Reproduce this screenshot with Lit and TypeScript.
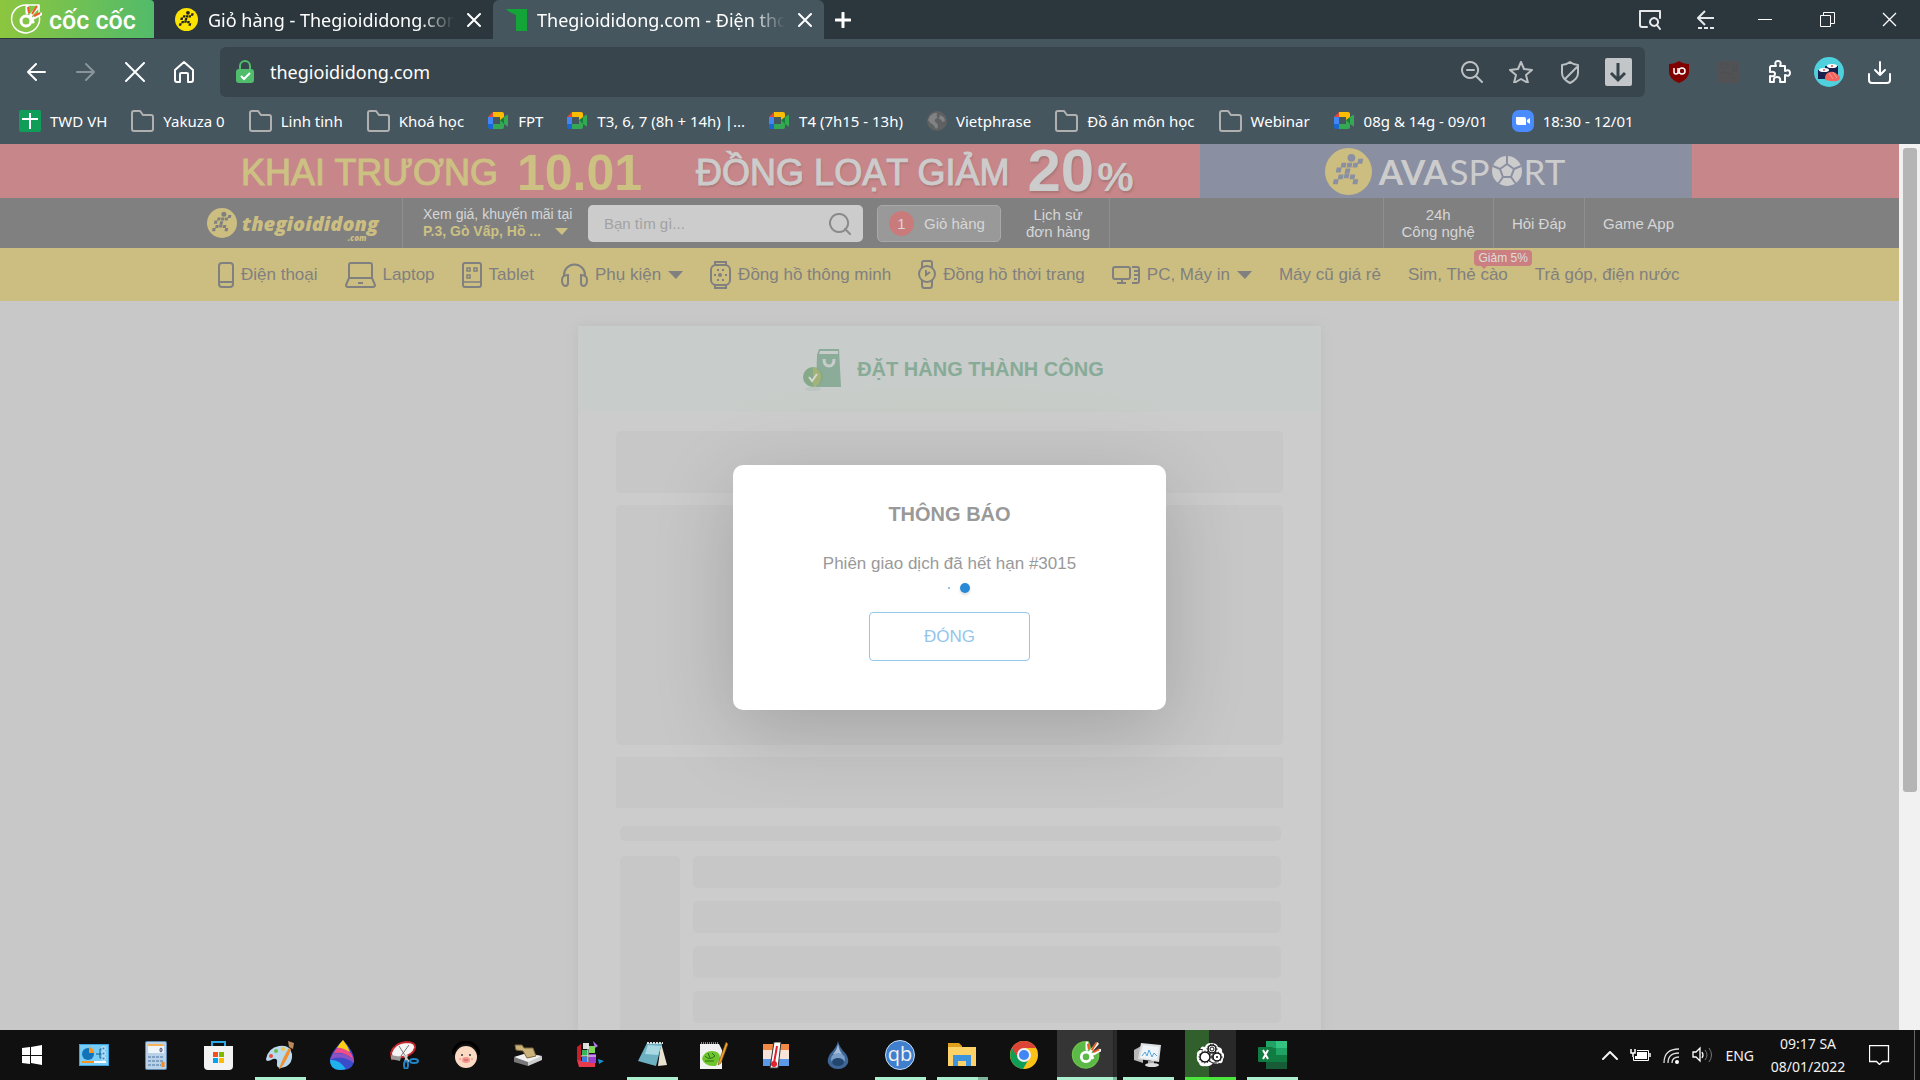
import { LitElement, html, svg, css, TemplateResult } from "lit";
import { customElement } from "lit/decorators.js";

type Art = TemplateResult;

const draw = (w: number, h: number, body: Art, view = `0 0 ${w} ${h}`) =>
  html`<svg width=${w} height=${h} viewBox=${view} fill="none" aria-hidden="true">${body}</svg>`;

/* ---------- shared marks ---------- */

const runnerBlocks: [number, number][] = [
  [36, 13], [31, 17], [25, 17], [19, 17], [14, 22], [23, 23], [22, 28], [28, 29],
  [16, 29], [31, 34], [11, 34],
];
const runner = (size: number, disc: string, ink: string) =>
  draw(size, size, svg`
    <circle cx="24" cy="24" r="24" fill=${disc} />
    <circle cx="27" cy="10" r="4" fill=${ink} />
    ${runnerBlocks.map(([x, y]) => svg`<path d="M${x - 2} ${y - 2}h5l-1 5h-5z" fill=${ink} />`)}
  `, "0 0 48 48");

const cocHand = (size: number, ring: string, fill: string, ground: string) =>
  draw(size, size, svg`
    <path d="M17 2A14 14 0 1 0 29 12L29 2Z" fill=${fill} stroke=${ring} stroke-width="1.5" stroke-linejoin="round" />
    <path d="M19 1h12v12l-7 2z" fill=${ground} />
    <circle cx="16" cy="18" r="5" stroke="#fff" stroke-width="3" />
    <path d="M20 13l3 6M17 3v7M28 4l-7 8M31 11l-7 4" stroke="#fff" stroke-width="3" stroke-linecap="round" />
    <path d="M18 4l1 6M27 3l-5 8M30 10l-6 3" stroke="#f15a24" stroke-width="2" />
  `, "0 0 32 32");

const caret = draw(15, 8, svg`<path d="M0 0h15L8 8z" fill="currentColor" />`);

/* ---------- browser chrome ---------- */

const line = (w: number, h: number, d: string, width = 2) =>
  draw(w, h, svg`<path d=${d} stroke="currentColor" stroke-width=${width} stroke-linecap="round" stroke-linejoin="round" />`);

const ui = {
  close: line(14, 14, "M1 1l12 12M13 1L1 13"),
  plus: line(16, 16, "M8 1v14M1 8h14", 3),
  back: line(20, 20, "M18 10H1M9 2l-8 8 8 8"),
  forward: line(20, 20, "M1 10h17M10 2l8 8-8 8"),
  stop: line(20, 20, "M1 1l18 18M19 1L1 19"),
  home: line(22, 24, "M2 10l9-8 9 8v10q0 2-2 2h-3v-8q0-1-1-1H8q-1 0-1 1v8H4q-2 0-2-2z"),
  lock: draw(18, 24, svg`
    <path d="M4 10V6a5 5 0 0 1 10 0v4" stroke="#4fbd6c" stroke-width="2" />
    <rect y="9" width="18" height="14" rx="3" fill="#4fbd6c" />
    <path d="M5 16l3 3 6-6" stroke="#fff" stroke-width="2" />`),
  zoomOut: line(22, 22, "M9 1a8 8 0 1 0 .1 0M15 15l6 6M6 9h7"),
  star: line(24, 22, "M12 1l3 7 8 1-6 5 2 8-7-4-7 4 2-8-6-5 8-1z"),
  shield: line(20, 23, "M10 1q4 3 8 3v8q0 6-8 10q-8-4-8-10V4q4 0 8-3zM17 6L5 18"),
  save: draw(27, 28, svg`
    <rect width="27" height="28" rx="2" fill="#c3c6c8" />
    <path d="M13 5v17M6 15l7 7 7-7" stroke="#37434b" stroke-width="3" />`),
  ublock: draw(20, 22, svg`
    <path d="M10 0q4 3 10 3v8q0 7-10 11Q0 18 0 11V3q6 0 10-3z" fill="#800000" />
    <path d="M5 7v4q0 2 2 2t2-2V7v6" stroke="#fff" stroke-width="1.5" />
    <circle cx="13" cy="10" r="3" stroke="#fff" stroke-width="1.5" />`),
  dim: draw(22, 22, svg`
    <rect width="22" height="22" rx="2" fill="#525254" />
    <path d="M3 3h7v4H3zM15 3h4v4h-4zM3 12q3-3 5 0t6-1 5 1M4 17h3m4 0h1m3 0h3" stroke="#484f54" stroke-width="1" />`),
  puzzle: line(25, 24, "M4 6h5q-2-5 2-5t2 5h5v5q5-2 5 2t-5 2v7h-5q1-5-3-5t-3 5H3v-6q5 1 5-2t-5-2V7z"),
  sushi: draw(31, 31, svg`
    <circle cx="15" cy="15" r="15" fill="#4fd0dd" />
    <path d="M11 9v9h13V9z" fill="#18224c" /><ellipse cx="18" cy="9" rx="5" ry="2" fill="#fff" />
    <circle cx="18" cy="9" r="1" fill="#e5484d" />
    <path d="M4 13v9h12v-9z" fill="#18224c" /><ellipse cx="10" cy="13" rx="5" ry="2" fill="#fff" />
    <circle cx="10" cy="13" r="1" fill="#e5484d" />
    <path d="M11 21q0-5 5-6t10 5q0 3-3 4t-12-1z" fill="#f4645f" />
    <path d="M15 16l4 6M19 15l4 6" stroke="#ff9d96" />`),
  download: line(23, 23, "M12 1v13M7 9l5 5 5-5M1 13v6q0 3 3 3h15q3 0 3-3v-6"),
  capture: line(22, 20, "M8 17H3q-2 0-2-2V1h20v7M15 8a4 4 0 1 0 .1 0M18 15l3 4"),
  shelf: draw(19, 19, svg`<path d="M17 8H1M8 1L1 8l7 7" stroke="currentColor" stroke-width="2" /><path d="M1 18h18" stroke="currentColor" stroke-width="2" stroke-dasharray="4 2" />`),
  minimise: draw(14, 2, svg`<path d="M0 0h14v1H0z" fill="#fff" />`),
  restore: draw(15, 15, svg`<path d="M.5 3.5h10v11H.5zM3.5 3V.5h11v11H11" stroke="#fff" />`),
  quit: draw(15, 15, svg`<path d="M1 1l13 13M14 1L1 14" stroke="#fff" stroke-width="1.3" />`),
};

const mark: Record<string, Art> = {
  sheet: draw(22, 22, svg`<rect width="22" height="22" rx="2" fill="#0f9d58" /><path d="M11 3v16M3 9h16" stroke="#fff" stroke-width="2" />`),
  folder: draw(23, 22, svg`<path d="M1 18V3q0-2 2-2h6l3 4h8q2 0 2 2v12q0 2-2 2H3q-2 0-2-2z" stroke="#b0b0b0" stroke-width="2" />`),
  meet: draw(21, 17, svg`
    <path d="M0 5h5v7H0z" fill="#4285f4" /><path d="M0 5l5-5v5z" fill="#ea4335" />
    <path d="M5 0h9q2 0 2 2v5l-4 2V5H5z" fill="#fbbc04" />
    <path d="M5 12h7V8l4 2v5q0 2-2 2H5z" fill="#34a853" /><path d="M0 12h5v5H2q-2 0-2-2z" fill="#1967d2" />
    <path d="M12 8l4-3v7z" fill="#15803a" /><path d="M16 5l3-2q1-1 1 1v10q0 1-1 0l-3-2z" fill="#34a853" />`),
  globe: draw(20, 20, svg`<circle cx="10" cy="10" r="10" fill="#5f6062" /><path d="M3 5q5-4 7-3-1 4 1 5-4 0-3 4 3 1 3 5l-2 2q-2-4-4-5t-4-4zM13 4q5 2 5 6l-3 1q0-3-3-3z" fill="#808284" />`),
  zoom: draw(22, 22, svg`<rect width="22" height="22" rx="7" fill="#4a8cff" /><path d="M4 7h8q2 0 2 2v6H6q-2 0-2-2zM15 10l3-2v6l-3-2z" fill="#fff" />`),
};

const bookmarks: [string, string][] = [
  ["sheet", "TWD VH"], ["folder", "Yakuza 0"], ["folder", "Linh tinh"], ["folder", "Khoá học"],
  ["meet", "FPT"], ["meet", "T3, 6, 7 (8h + 14h) |..."], ["meet", "T4 (7h15 - 13h)"],
  ["globe", "Vietphrase"], ["folder", "Đồ án môn học"], ["folder", "Webinar"],
  ["meet", "08g & 14g - 09/01"], ["zoom", "18:30 - 12/01"],
];

/* ---------- shop navigation ---------- */

const nav = {
  phone: draw(16, 26, svg`<rect x="1" y="1" width="14" height="24" rx="3" stroke="currentColor" stroke-width="2" /><path d="M1 20h14" stroke="currentColor" stroke-width="2" />`),
  laptop: draw(31, 26, svg`<path d="M4 16V3q0-2 2-2h19q2 0 2 2v13zM4 16l-3 7q0 2 2 2h25q2 0 2-2l-3-7M13 21h5" stroke="currentColor" stroke-width="2" />`),
  tablet: draw(20, 26, svg`<rect x="1" y="1" width="18" height="24" rx="2" stroke="currentColor" stroke-width="2" /><path d="M1 20h18M5 6h3v3H5zM12 6h3v3h-3zM5 13h3v3H5z" stroke="currentColor" stroke-width="1.5" />`),
  headphones: draw(27, 24, svg`<path d="M3 14v-2a10 10 0 0 1 21 0v2M7 12q-6 0-6 5t3 6q3 0 3-3zM20 12q6 0 6 5t-3 6q-3 0-3-3z" stroke="currentColor" stroke-width="2" />`),
  smartwatch: draw(21, 28, svg`<rect x="1" y="4" width="19" height="20" rx="5" stroke="currentColor" stroke-width="2" /><path d="M5 4V1h11v3M5 24v3h11v-3" stroke="currentColor" stroke-width="2" />
    <path d="M7 9h2M12 9h2M4 14h2M15 14h2M7 19h2M12 19h2" stroke="currentColor" stroke-width="2" /><circle cx="10" cy="14" r="2" fill="currentColor" />`),
  watch: draw(18, 29, svg`<circle cx="9" cy="14" r="8" stroke="currentColor" stroke-width="2" /><path d="M4 8V3q0-2 2-2h6q2 0 2 2v5M4 20v5q0 3 2 3h6q2 0 2-3v-5M8 10v5l4-3" stroke="currentColor" stroke-width="2" />`),
  pc: draw(28, 20, svg`<rect x="1" y="2" width="17" height="12" rx="2" stroke="currentColor" stroke-width="2" /><path d="M10 14v4M5 18h9M20 2h5q2 0 2 2v12q0 2-2 2h-5M22 6h4M22 10h4M22 14h3" stroke="currentColor" stroke-width="2" />`),
};

type NavItem = { text: string; icon?: Art; more?: boolean; badge?: string };
const navItems: NavItem[] = [
  { text: "Điện thoại", icon: nav.phone },
  { text: "Laptop", icon: nav.laptop },
  { text: "Tablet", icon: nav.tablet },
  { text: "Phụ kiện", icon: nav.headphones, more: true },
  { text: "Đồng hồ thông minh", icon: nav.smartwatch },
  { text: "Đồng hồ thời trang", icon: nav.watch },
  { text: "PC, Máy in", icon: nav.pc, more: true },
  { text: "Máy cũ giá rẻ" },
  { text: "Sim, Thẻ cào", badge: "Giảm 5%" },
  { text: "Trả góp, điện nước" },
];

const magnifier = line(22, 22, "M10 1a9 9 0 1 0 .1 0M16 16l5 5");
const football = draw(30, 30, svg`
  <circle cx="15" cy="15" r="15" fill="#ccc" />
  <path d="M15 8l7 5-3 8h-8l-3-8z" stroke="#8a8fa1" stroke-width="2" />
  <path d="M15 0v8M22 13l7-3M19 21l5 7M11 21l-5 7M8 13l-7-3" stroke="#8a8fa1" stroke-width="2" />`);
const bag = draw(48, 46, svg`
  <path d="M24 3h20l2 38H21l1-32z" fill="#8aac98" />
  <path d="M25 5h18v3H24z" fill="#c8cccb" />
  <path d="M29 13q0 7 5 7t5-7" stroke="#c8cccb" stroke-width="3" />
  <ellipse cx="18" cy="43" rx="8" ry="2" fill="#bcc5c0" />
  <circle cx="18" cy="31" r="10" fill="#86a98a" />
  <path d="M18 21a10 10 0 0 1 8 10 10 10 0 0 1-8 10z" fill="#a3b378" />
  <path d="M14 31l3 4 5-7" stroke="#d5d8d0" stroke-width="2" />`);

/* ---------- taskbar ---------- */

const cogs: [number, number, number][] = [[9, 14, 5], [16, 6, 4], [21, 14, 4]];

const app: Record<string, Art> = {
  start: draw(20, 20, svg`<path d="M0 3l8-1v8H0zM9 2l11-2v10H9zM0 11h8v8l-8-1zM9 11h11v9L9 18z" fill="#fff" />`),
  slides: draw(30, 22, svg`<rect width="30" height="22" fill="#3ba3e0" /><rect x="1" y="1" width="28" height="20" fill="#79cdf5" />
    <circle cx="9" cy="10" r="6" fill="#1273b8" /><path d="M10 9V3a6 6 0 0 1 5 6z" fill="#f7941d" />
    <path d="M17 10h4M21 5v9M21 5h3M21 10h3M21 14h3" stroke="#0e5a94" stroke-width="1" /><path d="M23 3h3v3h-3zM23 8h3v3h-3zM23 13h3v3h-3z" stroke="#fff" fill="#2f8fd0" stroke-width=".7" />
    <path d="M3 18h12" stroke="#f7941d" stroke-width="2" /><path d="M15 18h12" stroke="#fff" stroke-width="2" />`),
  calc: draw(22, 29, svg`<rect width="22" height="29" rx="2" fill="#5f87ab" /><rect x="1" y="1" width="20" height="27" rx="1" fill="#b9d2e8" />
    <rect x="3" y="4" width="16" height="8" fill="#eef5fb" /><path d="M3 4h16" stroke="#f7b35c" stroke-width="2" /><ellipse cx="16" cy="9" rx="1" ry="2" stroke="#446" />
    <path d="M3 16h16M3 20h16M3 24h13" stroke="#7fa2c4" stroke-width="2" stroke-dasharray="3 1" /><path d="M18 21v5" stroke="#f08c1d" stroke-width="3" />`),
  store: draw(29, 29, svg`<path d="M8 6V1h13v5" stroke="#2aa8e8" stroke-width="2" /><path d="M0 5h29v20q0 4-4 4H4q-4 0-4-4z" fill="#f3f3f3" />
    <path d="M9 11h5v5H9z" fill="#f25022" /><path d="M15 11h5v5h-5z" fill="#7fba00" /><path d="M9 17h5v5H9z" fill="#00a4ef" /><path d="M15 17h5v5h-5z" fill="#ffb900" />`),
  paint: draw(30, 29, svg`<path d="M1 18Q3 7 14 5t13 8q1 12-11 14-5 0-4-5t-4-4q-7 4-7 0z" fill="#b8d9ee" />
    <circle cx="6" cy="15" r="2" fill="#e3503e" /><circle cx="11" cy="10" r="2" fill="#6abf45" /><circle cx="18" cy="8" r="2" fill="#f5c542" />
    <path d="M14 28q4-12 10-21l2 1q-4 12-11 20z" fill="#f0902e" /><path d="M23 0l6 2-1 6-4-2z" fill="#b98a5d" />`),
  flame: draw(24, 30, svg`<path d="M13 0q11 12 11 19 0 11-12 11T0 19Q1 12 13 0z" fill="#3a4cc9" />
    <path d="M13 0q-4 4-6 8l13 4q-2-6-7-12z" fill="#fdd016" /><path d="M7 8q5-1 14 5l3 7Q12 10 3 14z" fill="#ef4d87" />
    <path d="M3 14q11-3 21 6v3Q10 14 0 20z" fill="#8b52c8" /><path d="M0 20q9-1 16 9-16 4-16-9z" fill="#1fb0ee" />`),
  snip: draw(29, 28, svg`<path d="M1 12Q4 2 16 1q10 0 9 6-2 7-12 9L2 18z" fill="#f5f5f5" stroke="#c4262e" stroke-width="2" />
    <path d="M9 5l7 11M19 4l-8 11" stroke="#777" /><path d="M1 14l10 2-1 4-9-2z" fill="#9a9a9a" />
    <path d="M14 14l5 7M17 14l-2 7" stroke="#ccc" stroke-width="2" /><ellipse cx="16" cy="24" rx="2" ry="4" stroke="#2286c9" stroke-width="2" /><ellipse cx="24" cy="20" rx="4" ry="2" stroke="#2286c9" stroke-width="2" />`),
  pig: draw(28, 28, svg`<path d="M1 14a13 13 0 0 1 26 0" stroke="#000" stroke-width="3" /><circle cx="14" cy="16" r="11" fill="#fbd9c3" />
    <circle cx="10" cy="14" r="1" fill="#333" /><circle cx="18" cy="14" r="1" fill="#333" /><circle cx="8" cy="18" r="1" fill="#f49a95" /><circle cx="20" cy="18" r="1" fill="#f49a95" />
    <ellipse cx="14" cy="19" rx="4" ry="3" fill="#f3958f" /><path d="M13 18v2M15 18v2" stroke="#c95a5a" />`),
  scanner: draw(28, 22, svg`<path d="M0 13l13-4 15 3-14 8z" fill="#f0f0f0" /><path d="M0 13l14 5v4L0 18z" fill="#777" /><path d="M14 18l14-6v4l-14 6z" fill="#ccc" />
    <path d="M1 1h7l2 3h9l3 8-9 2-4-7-7-1z" fill="#cbb27a" stroke="#7d6738" />`),
  cubes: draw(28, 28, svg`<path d="M1 6l4-3v18l-4-2z" fill="#c81e2c" /><path d="M1 19l18 3v4L3 26z" fill="#e83a4b" /><path d="M6 9h6v6H6z" fill="#34b55b" />
    <path d="M7 2h6v6H7z" fill="#ddd" /><path d="M13 5h6v7h-6z" fill="#7ed957" /><path d="M6 16h6v5H6z" fill="#3d7be0" /><path d="M13 13h7v9h-7z" fill="#9b3fd0" />
    <path d="M17 0l5 5-3 2z" fill="#b57ae8" /><path d="M22 18l6 2-5 3z" fill="#1790d0" /><path d="M12 4v17M5 15h15" stroke="#eee" />`),
  notepad: draw(29, 26, svg`<path d="M23 1l6 22-9 1z" fill="#e8e3cf" /><path d="M9 1h15l-6 23L0 19z" fill="#6cb0c2" /><path d="M10 3l13 1-3 9-13-1z" fill="#a8d8e2" /><path d="M9 1h16" stroke="#ddd" stroke-width="2" stroke-dasharray="2 1" />`),
  npp: draw(28, 27, svg`<path d="M0 2h19l3 6v19H0z" fill="#f2f2f2" /><path d="M1 1h18" stroke="#888" stroke-dasharray="1 1" stroke-width="2" />
    <path d="M2 17q2-8 10-8t8 7l-4 8q-11 1-14-7z" fill="#6fc52e" /><path d="M5 14q4 5 10 0M8 11l2 5M12 11l3 3M5 19h9" stroke="#2c6e12" /><path d="M26 0l2 2-7 19-3 2 1-4z" fill="#f2a12c" stroke="#6a4a10" stroke-width=".6" />`),
  thermo: draw(26, 27, svg`<path d="M0 2h26v11H0z" fill="#f28a45" /><path d="M0 8h26v9H0z" fill="#f8e3d8" /><path d="M0 17h26v7H0z" fill="#5d9ae6" />
    <path d="M11 0h7l-3 26H7z" fill="#fff" stroke="#333" /><path d="M14 4l-3 17" stroke="#e3222e" stroke-width="2" /><circle cx="11" cy="22" r="3" fill="#e3222e" />`),
  water: draw(22, 28, svg`<path d="M11 0q1 6 8 13 3 5 2 9-3 6-10 6T1 22q-1-4 2-9 7-7 8-13z" fill="#3e6697" /><path d="M11 3q1 6 4 10H6q4-4 5-10z" fill="#a7bed8" /><ellipse cx="11" cy="18" rx="7" ry="6" fill="#7c9fc9" /><ellipse cx="11" cy="21" rx="6" ry="4" fill="#23466f" />`),
  folder: draw(28, 24, svg`<path d="M0 0h11l3 3v5H0z" fill="#e09f1c" /><path d="M0 4h28v19H0z" fill="#ffd267" /><path d="M5 12h18v11h-5v-5h-8v5H5z" fill="#3d93dc" />`),
  chrome: draw(28, 28, svg`<circle cx="14" cy="14" r="14" fill="#fbc116" /><path d="M2 7a14 14 0 0 0 11 21l7-12-6-2z" fill="#109d58" /><path d="M2 7Q6 0 14 0t12 7H14v7H6z" fill="#db4437" />
    <circle cx="14" cy="14" r="7" fill="#f1f1f1" /><circle cx="14" cy="14" r="5" fill="#4285f4" />`),
  coc: cocHand(30, "#6cc04a", "#5bb947", "#353535"),
  monitor: draw(28, 25, svg`<path d="M0 7l9-5v18l-9-3z" fill="#b8b8b8" /><path d="M7 0l20 2-2 17-21-3z" fill="#dedede" /><path d="M9 2l16 2-2 13-17-2z" fill="#eef4f8" /><path d="M8 13l3-4 2 4 2-6 3 7 2-4 3 3" stroke="#58a6dc" /><path d="M14 18h6v4h-6z" fill="#aaa" /><ellipse cx="18" cy="22" rx="7" ry="2" fill="#ddd" />`),
  gears: draw(28, 24, svg`
    <path d="M1 12q-1-3 3-5 1-5 5-3 1-4 6-4 6 0 7 4 5 1 4 5 4 3 1 7 0 5-4 4-3 2-6 0-3 4-8 3-5 1-6-3-3-2-2-8z" fill="#fff" />
    ${cogs.map(([x, y, r]) => svg`<circle cx=${x} cy=${y} r=${r} fill="#fff" stroke="#111" stroke-width="1.5" /><circle cx=${x} cy=${y} r=${r + 1} stroke="#111" stroke-width="1" stroke-dasharray="1 2" />`)}
    <circle cx="16" cy="6" r="2" stroke="#111" /><circle cx="21" cy="14" r="1" fill="#111" />
    <path d="M13 18l4 2 4 0M3 6l4 1M16 12v4" stroke="#111" />`),
  excel: draw(29, 28, svg`<path d="M8 0h21v28H8z" fill="#107c41" /><path d="M8 0h10v7H8z" fill="#21a366" /><path d="M18 0h11v7H18z" fill="#33c481" /><path d="M18 7h11v7H18z" fill="#21a366" /><path d="M8 21h21v7H8z" fill="#185c37" />
    <rect y="6" width="15" height="15" rx="1" fill="#107c41" /><path d="M5 9l5 9M10 9l-5 9" stroke="#fff" stroke-width="2" />`),
};

const apps: [string, string, string][] = [
  ["start", "Start", ""], ["slides", "Slides", ""], ["calc", "Calculator", ""], ["store", "Store", ""],
  ["paint", "Paint", "open"], ["flame", "Paint 3D", ""], ["snip", "Snipping Tool", ""], ["pig", "Pig", ""],
  ["scanner", "Scanner", ""], ["cubes", "Registry", ""], ["notepad", "Notepad", "open"], ["npp", "Notepad++", ""],
  ["thermo", "Thermometer", ""], ["water", "Rainmeter", ""], ["qb", "qBittorrent", "open"], ["folder", "Explorer", "open stacked"],
  ["chrome", "Chrome", ""], ["coc", "Cốc Cốc", "open active"], ["monitor", "Monitor", "open"], ["gears", "Gears", "open busy"],
  ["excel", "Excel", "open"],
];

const tray = {
  up: line(16, 9, "M1 8l7-7 7 7"),
  battery: draw(21, 14, svg`<path d="M1 1v4h4V1M3 5v4" stroke="#fff" stroke-width="1.5" /><path d="M7 2.5h11.500v10H3.500V9" stroke="#fff" /><path d="M7 4h10v7H5V8h2z" fill="#fff" /><path d="M20 5v4" stroke="#fff" stroke-width="1.5" />`),
  wifi: draw(17, 17, svg`<circle cx="14" cy="15" r="2" fill="#fff" /><path d="M9 16q0-6 7-6M5 16q0-10 11-10M1 16Q1 2 16 2" stroke="#ddd" stroke-width="1.3" />`),
  sound: draw(21, 18, svg`<path d="M1 6h3l4-4v13l-4-4H1z" stroke="#fff" stroke-width="1.3" /><path d="M10 6q2 3 0 6" stroke="#fff" stroke-width="1.3" /><path d="M13 4q4 5 0 10M17 2q5 7 0 14" stroke="#777" />`),
  note: draw(21, 20, svg`<path d="M.5 .5h19v16h-6l-3 3-3-3h-7z" stroke="#fff" stroke-width="1.3" />`),
};

/* ---------- elements ---------- */

const base = css`
  * { box-sizing: border-box; }
  svg { display: block; flex: none; }
  button { border: 0; padding: 0; background: none; color: inherit; font: inherit; display: flex; align-items: center; justify-content: center; }
  a { color: inherit; text-decoration: none; }
  input { border: 0; padding: 0; background: none; outline: 0; font: inherit; min-width: 0; }
`;

@customElement("browser-chrome")
class BrowserChrome extends LitElement {
  static styles = [base, css`
    :host { display: block; background: #45565f; color: #fff; font-family: "Noto Sans", sans-serif; }
    .strip { display: flex; height: 39px; background: #2c373d; }
    .brand { width: 154px; height: 38px; flex: none; display: flex; align-items: center; gap: 7px; padding-left: 10px;
      background: linear-gradient(90deg, #8dc63f, #52bb6a); border-radius: 0 4px 0 0; margin-right: 8px; font: 500 25px/38px Roboto, sans-serif; }
    .word { padding-top: 4px; }
    .tab { width: 331px; display: flex; align-items: center; padding: 0 12px 0 13px; font-size: 18px; }
    .tab.current { background: #45565f; border-radius: 6px 6px 0 0; }
    .title { flex: 1; min-width: 0; margin: 0 13px 0 10px; overflow: hidden; white-space: nowrap; line-height: 28px;
      mask-image: linear-gradient(90deg, #000 86%, transparent); }
    .add { width: 38px; }
    .controls { display: flex; margin-left: auto; color: #e6e8e9; }
    .small { width: 56px; }
    .wide { width: 62px; }
    .toolbar { display: flex; align-items: center; padding: 8px 16px 0 12px; }
    .tool { width: 49px; height: 50px; }
    .off { color: #8a959b; }
    .address { flex: 1; display: flex; align-items: center; height: 50px; margin: 0 9px 0 12px; padding: 0 2px 0 16px;
      background: #39454c; border-radius: 6px; color: #b9bfc2; }
    .url { flex: 1; margin-left: 16px; font-size: 18px; color: #fff; }
    .ext { width: 50px; height: 50px; }
    .marks { display: flex; align-items: center; height: 47px; padding-left: 19px; gap: 24px; font-size: 15px; white-space: nowrap; }
    .mark { display: flex; align-items: center; gap: 9px; }
  `];

  render() {
    return html`
      <div class="strip">
        <div class="brand">${cocHand(32, "#fff", "none", "none")}<span class="word">cốc cốc</span></div>
        <div class="tab">${runner(23, "#fce300", "#222")}<span class="title">Giỏ hàng - Thegioididong.com</span><button aria-label="Close tab">${ui.close}</button></div>
        <div class="tab current">${draw(21, 22, svg`<path d="M0 0h21v22H10V6Q4 4 0 0z" fill="#13a538" />`)}<span class="title">Thegioididong.com - Điện thoại</span><button aria-label="Close tab">${ui.close}</button></div>
        <button class="add" aria-label="New tab">${ui.plus}</button>
        <div class="controls">
          <button class="small" aria-label="Search tabs">${ui.capture}</button>
          <button class="small" aria-label="Side shelf">${ui.shelf}</button>
          <button class="wide" aria-label="Minimise">${ui.minimise}</button>
          <button class="wide" aria-label="Restore">${ui.restore}</button>
          <button class="wide" aria-label="Close window">${ui.quit}</button>
        </div>
      </div>
      <div class="toolbar">
        <button class="tool" aria-label="Back">${ui.back}</button>
        <button class="tool off" aria-label="Forward">${ui.forward}</button>
        <button class="tool" aria-label="Stop">${ui.stop}</button>
        <button class="tool" aria-label="Home">${ui.home}</button>
        <div class="address">
          ${ui.lock}<input class="url" aria-label="Address" value="thegioididong.com" />
          <button class="tool" aria-label="Zoom out">${ui.zoomOut}</button>
          <button class="tool" aria-label="Bookmark">${ui.star}</button>
          <button class="tool" aria-label="Shield">${ui.shield}</button>
          <button class="tool" aria-label="Save media">${ui.save}</button>
        </div>
        <button class="ext" aria-label="uBlock">${ui.ublock}</button>
        <button class="ext" aria-label="Extension">${ui.dim}</button>
        <button class="ext" aria-label="Extensions">${ui.puzzle}</button>
        <button class="ext" aria-label="Profile">${ui.sushi}</button>
        <button class="ext" aria-label="Downloads">${ui.download}</button>
      </div>
      <nav class="marks">${bookmarks.map(([icon, text]) => html`<a class="mark" href="#">${mark[icon]}<span>${text}</span></a>`)}</nav>
    `;
  }
}

@customElement("shop-page")
class ShopPage extends LitElement {
  static styles = [base, css`
    :host { display: flex; overflow: hidden; font-family: "Liberation Sans", Arial, sans-serif; }
    .view { flex: 1; min-width: 0; position: relative; background: #c8c8c8; overflow: hidden; }
    .scroll { width: 21px; padding: 4px 3px 0 4px; background: #f1f1f1; }
    .thumb { height: 73%; border-radius: 3px; background: #b5b5b5; }
    .inner { display: flex; max-width: 1485px; margin: 0 auto; height: 100%; }

    .banner { display: block; height: 54px; background: #c78689; line-height: 54px; white-space: nowrap; }
    .promo { flex: 1; display: flex; align-items: center; padding-left: 34px; color: #ccc; font-size: 36px; -webkit-text-stroke: 1px currentColor; }
    .open { color: #ccc182; padding-top: 4px; }
    .date { color: #ccc182; font-size: 50px; font-weight: 700; margin: 0 54px 0 19px; padding-top: 4px; -webkit-text-stroke: 0; }
    .off { padding-top: 4px; text-shadow: 1px 2px 2px #a77; }
    .twenty { font-size: 60px; font-weight: 700; margin-left: 18px; text-shadow: 1px 2px 2px #a77; -webkit-text-stroke: 0; }
    .percent { font-size: 41px; font-weight: 700; margin-left: 3px; padding-top: 12px; text-shadow: 1px 2px 2px #a77; -webkit-text-stroke: 0; }
    .ava { width: 492px; display: flex; align-items: center; justify-content: center; background: #8a8fa1; color: #ccc; font: 700 35px/54px Lato, sans-serif; }
    .name { margin-left: 7px; }
    .thin { font-weight: 400; margin: 0 2px; }

    .head { height: 50px; background: #808080; color: #d6d6d6; font-size: 15px; line-height: 17px; }
    .logo { display: flex; align-items: center; gap: 5px; width: 196px; border-right: 1px solid #8e8e8e; color: #ccbe80; }
    .word { display: flex; flex-direction: column; padding-top: 6px; font: italic 800 20px/28px "Open Sans", sans-serif; }
    .com { align-self: flex-end; font-size: 8px; line-height: 8px; margin: -4px 12px 0 0; }
    .place { width: 185px; padding: 0 20px; display: block; text-align: left; font-size: 14px; line-height: 17px; white-space: nowrap; }
    .where { display: flex; justify-content: space-between; align-items: center; color: #ccc182; font-weight: 700; }
    .search { width: 275px; margin: 7px 14px 6px 0; padding: 0 12px 0 16px; display: flex; align-items: center; background: #ccc; border-radius: 5px; color: #8a8a8a; }
    .query { flex: 1; }
    .query::placeholder { color: #a2a2a2; opacity: 1; }
    .cart { width: 124px; margin: 7px 0 6px; padding-left: 11px; display: flex; align-items: center; gap: 10px; background: #999; border: 1px solid #a8a8a8; border-radius: 5px; }
    .count { width: 25px; height: 25px; border-radius: 50%; background: #c97b7b; text-align: center; line-height: 25px; }
    .cell { display: flex; align-items: center; text-align: center; padding: 0 18px; border-left: 1px solid #8e8e8e; }
    .history { border-left: 0; border-right: 1px solid #8e8e8e; padding: 0 19px 0 25px; }
    .links { display: flex; margin-left: auto; }

    .nav { height: 53px; background: #ccbe80; color: #808080; font-size: 17px; white-space: nowrap; }
    .menu { padding-left: 11px; gap: 27px; align-items: center; }
    .item { position: relative; display: flex; align-items: center; gap: 7px; color: #808080; }
    .badge { position: absolute; right: -24px; top: -15px; height: 16px; padding: 0 4px; border-radius: 4px; background: #cc7f80; color: #ddd; font-size: 12px; line-height: 16px; }
    .badge::after { content: ""; position: absolute; left: 7px; top: 16px; border: 3px solid transparent; border-top-color: #cc7f80; }

    .card { max-width: 743px; margin: 25px auto 0; background: #ccc; box-shadow: 0 0 10px #bdbdbd; }
    .done { height: 86px; display: flex; align-items: center; justify-content: center; gap: 14px; margin: 0;
      background: radial-gradient(ellipse 290px 34px at 50% 100%, #c8ccc6, #c8cccb); color: #87ab97; font-size: 20px; font-weight: 700; }
    .bones { display: flex; flex-direction: column; gap: 12px; padding: 19px 38px 0; }
    .bone { background: #c7c7c7; border-radius: 5px; }
    .b1 { height: 62px; }
    .b2 { height: 240px; }
    .b3 { height: 51px; border-radius: 0; }
    .list { display: grid; grid-template-columns: 60px 1fr; gap: 15px 13px; padding: 6px 2px 0 4px; }
    .bar { grid-column: 1 / 3; height: 15px; }
    .rows { display: flex; flex-direction: column; gap: 13px; }
    .row { height: 32px; }

    .overlay { position: absolute; inset: 0; display: flex; align-items: center; justify-content: center; }
    .dialog { width: 433px; height: 245px; display: flex; flex-direction: column; align-items: center; padding-top: 38px; border-radius: 10px; background: #fff; color: #999;
      box-shadow: 0 20px 80px rgba(0, 0, 0, 0.18); font-size: 17px; }
    .heading { margin: 0 0 28px; font-size: 20px; line-height: 23px; }
    .message { margin: 0; line-height: 20px; }
    .dots { display: flex; align-items: center; gap: 10px; height: 29px; padding-left: 18px; }
    .dot { width: 10px; height: 10px; border-radius: 50%; background: #288ad6; box-shadow: 0 2px 3px #ddd; }
    .speck { width: 2px; height: 2px; background: #94c5eb; }
    .dialog .shut { width: 161px; height: 49px; margin-top: 9px; padding-top: 1px; border: 1px solid #94c5eb; border-radius: 4px; color: #94c5eb; }
  `];

  render() {
    return html`
      <div class="view">
        <a class="banner" href="#"><div class="inner">
          <div class="promo"><span class="open">KHAI TRƯƠNG</span><span class="date">10.01</span><span class="off">ĐỒNG LOẠT GIẢM</span><span class="twenty">20</span><span class="percent">%</span></div>
          <div class="ava">${runner(47, "#ccbe80", "#8a8fa1")}<span class="name">AVA</span><span class="thin">SP</span>${football}<span class="thin">RT</span></div>
        </div></a>
        <header class="head"><div class="inner">
          <a class="logo" href="#">${runner(30, "#ccbe80", "#808080")}<span class="word"><span>thegioididong</span><span class="com">.com</span></span></a>
          <button class="place">Xem giá, khuyến mãi tại<span class="where">P.3, Gò Vấp, Hồ ...${draw(13, 7, svg`<path d="M0 0h13L7 7z" fill="currentColor" />`)}</span></button>
          <div class="search"><input class="query" aria-label="Tìm kiếm" placeholder="Bạn tìm gì..." />${magnifier}</div>
          <a class="cart" href="#"><span class="count">1</span>Giỏ hàng</a>
          <a class="cell history" href="#">Lịch sử<br />đơn hàng</a>
          <div class="links"><a class="cell" href="#">24h<br />Công nghệ</a><a class="cell" href="#">Hỏi Đáp</a><a class="cell" href="#">Game App</a></div>
        </div></header>
        <nav class="nav"><div class="inner menu">
          ${navItems.map((n) => html`<a class="item" href="#">${n.icon}<span>${n.text}</span>${n.more ? caret : ""}${n.badge ? html`<span class="badge">${n.badge}</span>` : ""}</a>`)}
        </div></nav>
        <main class="card">
          <h1 class="done">${bag}<span>ĐẶT HÀNG THÀNH CÔNG</span></h1>
          <div class="bones">
            <div class="bone b1"></div><div class="bone b2"></div><div class="bone b3"></div>
            <div class="list">
              <div class="bone bar"></div>
              <div class="bone"></div>
              <div class="rows">${[1, 2, 3, 4, 5].map(() => html`<div class="bone row"></div>`)}</div>
            </div>
          </div>
        </main>
        <div class="overlay">
          <section class="dialog" role="dialog" aria-labelledby="notice">
            <h2 class="heading" id="notice">THÔNG BÁO</h2>
            <p class="message">Phiên giao dịch đã hết hạn #3015</p>
            <div class="dots"><span class="speck"></span><span class="dot"></span></div>
            <button class="shut">ĐÓNG</button>
          </section>
        </div>
      </div>
      <div class="scroll"><div class="thumb"></div></div>
    `;
  }
}

@customElement("task-bar")
class TaskBar extends LitElement {
  static styles = [base, css`
    :host { display: flex; height: 50px; padding-left: 1px; background: #101010; color: #f2f2f2; font: 14px/23px "Noto Sans", sans-serif; }
    .app { position: relative; width: 62px; height: 50px; flex: none; }
    .open::after { content: ""; position: absolute; left: 6px; right: 5px; bottom: 0; height: 3px; background: #aaf0cf; }
    .stacked::after { background: linear-gradient(90deg, #aaf0cf 80%, #7fb59c 80%); }
    .active { background: linear-gradient(90deg, transparent 2px, #353535 2px, #353535 58px, #1c1c1c 58px, #2a2a2a 59px); }
    .active::after { left: 2px; right: 0; background: linear-gradient(90deg, #aaf0cf 93%, #7fb59c 93%); }
    .busy { background: linear-gradient(90deg, transparent 6px, #31602d 6px, #31602d 30px, #292929 30px, #292929 57px, transparent 57px); }
    .busy::after { background: #4be63c; }
    .qb { width: 30px; height: 30px; border-radius: 50%; border: 1px solid #c6dcf5; background: #3f7fce; font: 20px/26px "Open Sans", sans-serif; text-align: center; }
    .tray { display: flex; align-items: center; margin-left: auto; gap: 12px; }
    .clock { width: 82px; margin: 0 8px 0 1px; text-align: center; }
    .edge { width: 1px; height: 50px; margin: 0 5px 0 12px; background: #666; }
  `];

  render() {
    return html`
      ${apps.map(([id, name, state]) => html`<button class="app ${state}" aria-label=${name}>${id === "qb" ? html`<span class="qb">qb</span>` : app[id]}</button>`)}
      <div class="tray">
        ${tray.up}${tray.battery}${tray.wifi}${tray.sound}
        <span>ENG</span>
        <time class="clock">09:17 SA<br />08/01/2022</time>
        ${tray.note}
        <span class="edge"></span>
      </div>
    `;
  }
}

@customElement("app-root")
class AppRoot extends LitElement {
  static styles = css`
    :host { display: flex; flex-direction: column; height: 100vh; overflow: hidden; }
    .page { flex: 1; min-height: 0; }
  `;

  render() {
    return html`<browser-chrome></browser-chrome><shop-page class="page"></shop-page><task-bar></task-bar>`;
  }
}
